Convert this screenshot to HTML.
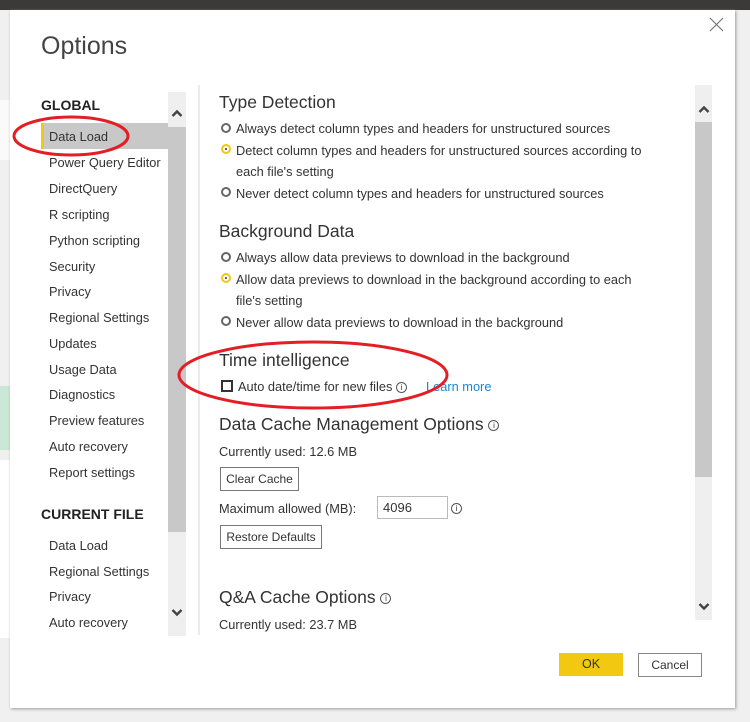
<!DOCTYPE html>
<html><head><meta charset="utf-8"><style>
*{margin:0;padding:0;box-sizing:border-box}
body{width:750px;height:722px;position:relative;overflow:hidden;background:#f0f0f0;font-family:"Liberation Sans",sans-serif;color:#333}
.a{position:absolute;white-space:nowrap}
.t{font-size:12.8px}
.h{font-size:17.5px;color:#333}
.nav{font-size:12.8px;left:49px}
.r{position:absolute;width:10px;height:10px;border:2px solid #666;border-radius:50%}
.ry{border-color:#f2c811}
.ry:after{content:"";position:absolute;left:2px;top:2px;width:2px;height:2px;background:#333;border-radius:50%}
.btn{position:absolute;border:1px solid #777;background:#fff;font-size:12px;text-align:center}
.i{display:inline-block;width:11px;height:11px;border:1px solid #555;border-radius:50%;font-size:8px;line-height:9px;text-align:center;vertical-align:middle}
</style></head><body>
<div class="a" style="left:0;top:0;width:750px;height:10px;background:#3b3a39"></div>
<div class="a" style="left:0;top:100px;width:10px;height:60px;background:#fafafa"></div>
<div class="a" style="left:0;top:386px;width:10px;height:64px;background:#c9e8d6"></div>
<div class="a" style="left:0;top:460px;width:10px;height:178px;background:#fff"></div>
<div class="a" style="left:10px;top:10px;width:725px;height:698px;background:#fff;box-shadow:1px 1px 3px #999"></div>
<svg class="a" style="left:709px;top:17px" width="15" height="15"><path d="M1 1L14 14M14 1L1 14" stroke="#777" stroke-width="1.2"/></svg>
<div class="a" style="left:41px;top:32px;font-size:25px;color:#444">Options</div>
<div class="a" style="left:41px;top:97px;font-size:14px;font-weight:bold;color:#222">GLOBAL</div>
<div class="a" style="left:41px;top:123px;width:127px;height:26px;background:#c8c8c8;border-left:3px solid #f2c811"></div>
<div class="a nav" style="top:129px">Data Load</div>
<div class="a nav" style="top:155px">Power Query Editor</div>
<div class="a nav" style="top:181px">DirectQuery</div>
<div class="a nav" style="top:207px">R scripting</div>
<div class="a nav" style="top:233px">Python scripting</div>
<div class="a nav" style="top:259px">Security</div>
<div class="a nav" style="top:284px">Privacy</div>
<div class="a nav" style="top:310px">Regional Settings</div>
<div class="a nav" style="top:336px">Updates</div>
<div class="a nav" style="top:362px">Usage Data</div>
<div class="a nav" style="top:387px">Diagnostics</div>
<div class="a nav" style="top:413px">Preview features</div>
<div class="a nav" style="top:439px">Auto recovery</div>
<div class="a nav" style="top:465px">Report settings</div>
<div class="a" style="left:41px;top:506px;font-size:14px;font-weight:bold;color:#222">CURRENT FILE</div>
<div class="a nav" style="top:538px">Data Load</div>
<div class="a nav" style="top:564px">Regional Settings</div>
<div class="a nav" style="top:589px">Privacy</div>
<div class="a nav" style="top:615px">Auto recovery</div>
<div class="a" style="left:168px;top:92px;width:18px;height:544px;background:#efefef"></div>
<div class="a" style="left:168px;top:127px;width:18px;height:405px;background:#c8c8c8"></div>
<svg class="a" style="left:171px;top:108px" width="12" height="10"><path d="M1.5 8L6 3.5L10.5 8" fill="none" stroke="#444" stroke-width="2.4"/></svg>
<svg class="a" style="left:171px;top:608px" width="12" height="10"><path d="M1.5 2L6 6.5L10.5 2" fill="none" stroke="#444" stroke-width="2.4"/></svg>
<div class="a" style="left:198px;top:85px;width:2px;height:550px;background:#eaeaea"></div>
<div class="a" style="left:695px;top:85px;width:17px;height:535px;background:#efefef"></div>
<div class="a" style="left:695px;top:122px;width:17px;height:355px;background:#c8c8c8"></div>
<svg class="a" style="left:698px;top:104px" width="12" height="10"><path d="M1.5 8L6 3.5L10.5 8" fill="none" stroke="#444" stroke-width="2.4"/></svg>
<svg class="a" style="left:698px;top:602px" width="12" height="10"><path d="M1.5 2L6 6.5L10.5 2" fill="none" stroke="#444" stroke-width="2.4"/></svg>
<div class="a h" style="left:219px;top:92px">Type Detection</div>
<div class="r" style="left:221px;top:123px"></div><div class="a t" style="left:236px;top:121px">Always detect column types and headers for unstructured sources</div>
<div class="r ry" style="left:221px;top:144px"></div><div class="a t" style="left:236px;top:143px">Detect column types and headers for unstructured sources according to</div>
<div class="a t" style="left:236px;top:164px">each file's setting</div>
<div class="r" style="left:221px;top:187px"></div><div class="a t" style="left:236px;top:186px">Never detect column types and headers for unstructured sources</div>
<div class="a h" style="left:219px;top:221px">Background Data</div>
<div class="r" style="left:221px;top:252px"></div><div class="a t" style="left:236px;top:250px">Always allow data previews to download in the background</div>
<div class="r ry" style="left:221px;top:273px"></div><div class="a t" style="left:236px;top:272px">Allow data previews to download in the background according to each</div>
<div class="a t" style="left:236px;top:293px">file's setting</div>
<div class="r" style="left:221px;top:316px"></div><div class="a t" style="left:236px;top:315px">Never allow data previews to download in the background</div>
<div class="a h" style="left:219px;top:350px">Time intelligence</div>
<div class="a" style="left:221px;top:380px;width:12px;height:12px;border:2px solid #333"></div>
<div class="a t" style="left:238px;top:379px">Auto date/time for new files <span class="i">i</span></div>
<div class="a t" style="left:426px;top:379px;color:#1a86d0">Learn more</div>
<div class="a h" style="left:219px;top:414px">Data Cache Management Options <span class="i">i</span></div>
<div class="a t" style="left:219px;top:444px">Currently used: 12.6 MB</div>
<div class="btn" style="left:220px;top:467px;width:79px;height:24px;line-height:22px">Clear Cache</div>
<div class="a t" style="left:219px;top:501px">Maximum allowed (MB):</div>
<div class="a" style="left:377px;top:496px;width:71px;height:23px;border:1px solid #bbb;font-size:13px;padding:3px 0 0 5px">4096</div>
<div class="a" style="left:451px;top:500px"><span class="i">i</span></div>
<div class="btn" style="left:220px;top:525px;width:102px;height:24px;line-height:22px">Restore Defaults</div>
<div class="a h" style="left:219px;top:587px">Q&amp;A Cache Options <span class="i">i</span></div>
<div class="a t" style="left:219px;top:617px">Currently used: 23.7 MB</div>
<div class="a" style="left:559px;top:653px;width:64px;height:23px;background:#f2c811;font-size:12.5px;text-align:center;line-height:23px">OK</div>
<div class="btn" style="left:638px;top:653px;width:64px;height:24px;line-height:22px;border-color:#888">Cancel</div>
<svg class="a" style="left:0;top:0" width="750" height="722"><g fill="none" stroke="#e31e24" stroke-width="3">
<ellipse cx="71" cy="136" rx="57" ry="19"/><ellipse cx="313" cy="375" rx="134" ry="33"/></g></svg>
</body></html>
